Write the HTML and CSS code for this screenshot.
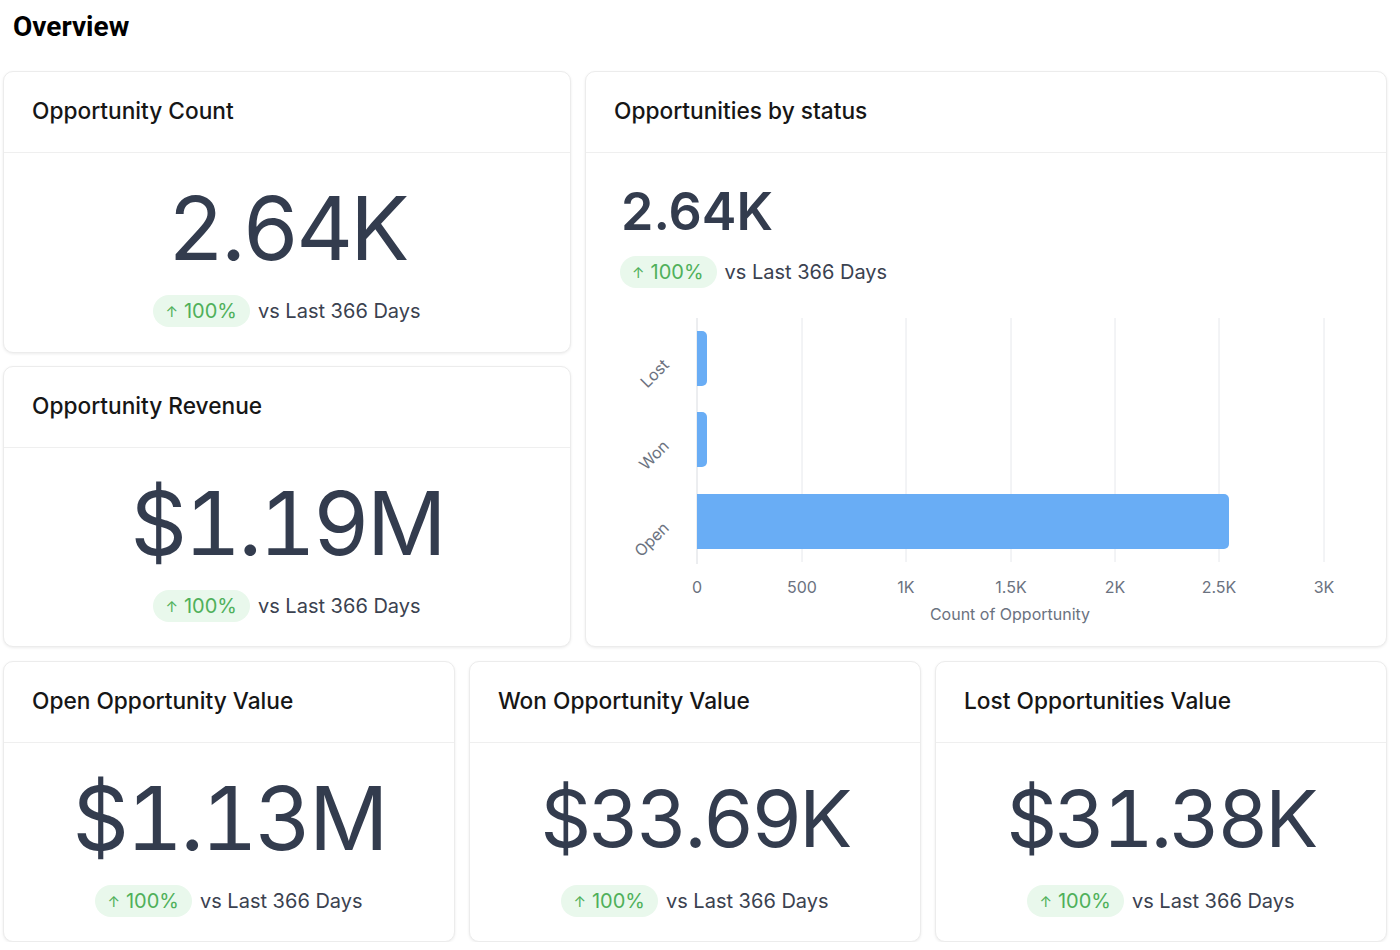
FILE: index.html
```html
<!DOCTYPE html>
<html lang="en">
<head>
    <meta charset="UTF-8">
    <meta name="viewport" content="width=device-width, initial-scale=1.0">
    <title>Overview</title>
    <link rel="stylesheet" href="styles.css">
</head>
<body>
    <div class="page">
        <h1 class="page-title">Overview</h1>

        <div class="top-grid">
            <div class="card kpi-card">
                <div class="card-header">Opportunity Count</div>
                <div class="kpi-body">
                    <div class="kpi-value">2.64K</div>
                    <div class="delta-row">
                        <span class="delta-badge"><span class="arrow">&#8593;</span> 100%</span>
                        <span class="delta-text">vs Last 366 Days</span>
                    </div>
                </div>
            </div>

            <div class="card chart-card">
                <div class="card-header">Opportunities by status</div>
                <div class="chart-body">
                    <div class="chart-value">2.64K</div>
                    <div class="delta-row">
                        <span class="delta-badge"><span class="arrow">&#8593;</span> 100%</span>
                        <span class="delta-text">vs Last 366 Days</span>
                    </div>
                    <svg class="bar-chart" width="800" height="336" viewBox="0 0 800 336">
                        <!-- grid lines -->
                        <g class="grid">
                            <line x1="111" y1="18" x2="111" y2="264" class="axis-line"/>
                            <line x1="216" y1="18" x2="216" y2="262"/>
                            <line x1="320" y1="18" x2="320" y2="262"/>
                            <line x1="425" y1="18" x2="425" y2="262"/>
                            <line x1="529" y1="18" x2="529" y2="262"/>
                            <line x1="633" y1="18" x2="633" y2="262"/>
                            <line x1="738" y1="18" x2="738" y2="262"/>
                        </g>
                        <!-- bars -->
                        <path class="bar" d="M111 31 H116 a5 5 0 0 1 5 5 V81 a5 5 0 0 1 -5 5 H111 Z"/>
                        <path class="bar" d="M111 112 H116 a5 5 0 0 1 5 5 V162 a5 5 0 0 1 -5 5 H111 Z"/>
                        <path class="bar" d="M111 194 H638 a5 5 0 0 1 5 5 V244 a5 5 0 0 1 -5 5 H111 Z"/>
                        <!-- category labels -->
                        <text class="cat-label" transform="translate(84 66) rotate(-45)">Lost</text>
                        <text class="cat-label" transform="translate(84 147) rotate(-45)">Won</text>
                        <text class="cat-label" transform="translate(84 229) rotate(-45)">Open</text>
                        <!-- value axis -->
                        <g class="tick-label">
                            <text x="111" y="293">0</text>
                            <text x="216" y="293">500</text>
                            <text x="320" y="293">1K</text>
                            <text x="425" y="293">1.5K</text>
                            <text x="529" y="293">2K</text>
                            <text x="633" y="293">2.5K</text>
                            <text x="738" y="293">3K</text>
                        </g>
                        <text class="axis-title" x="424" y="320">Count of Opportunity</text>
                    </svg>
                </div>
            </div>

            <div class="card kpi-card">
                <div class="card-header">Opportunity Revenue</div>
                <div class="kpi-body">
                    <div class="kpi-value">$1.19M</div>
                    <div class="delta-row">
                        <span class="delta-badge"><span class="arrow">&#8593;</span> 100%</span>
                        <span class="delta-text">vs Last 366 Days</span>
                    </div>
                </div>
            </div>
        </div>

        <div class="bottom-grid">
            <div class="card kpi-card">
                <div class="card-header">Open Opportunity Value</div>
                <div class="kpi-body">
                    <div class="kpi-value">$1.13M</div>
                    <div class="delta-row">
                        <span class="delta-badge"><span class="arrow">&#8593;</span> 100%</span>
                        <span class="delta-text">vs Last 366 Days</span>
                    </div>
                </div>
            </div>
            <div class="card kpi-card">
                <div class="card-header">Won Opportunity Value</div>
                <div class="kpi-body">
                    <div class="kpi-value long">$33.69K</div>
                    <div class="delta-row">
                        <span class="delta-badge"><span class="arrow">&#8593;</span> 100%</span>
                        <span class="delta-text">vs Last 366 Days</span>
                    </div>
                </div>
            </div>
            <div class="card kpi-card">
                <div class="card-header">Lost Opportunities Value</div>
                <div class="kpi-body">
                    <div class="kpi-value long">$31.38K</div>
                    <div class="delta-row">
                        <span class="delta-badge"><span class="arrow">&#8593;</span> 100%</span>
                        <span class="delta-text">vs Last 366 Days</span>
                    </div>
                </div>
            </div>
        </div>
    </div>
</body>
</html>
```

FILE: styles.css
```css
body {
    margin: 0;
    padding: 0;
    font-family: Inter, "Noto Sans", sans-serif;
    background-color: #ffffff;
    color: #111827;
}
.page {
    padding: 0 13px 0 3px;
}
/* Page title */
.page-title {
    margin: 0 0 24px 10px;
    padding-top: 7px;
    height: 40px;
    line-height: 40px;
    font-family: Roboto, "Liberation Sans", sans-serif;
    font-size: 28px;
    font-weight: 700;
    color: #000;
}
/* Grids */
.top-grid {
    display: grid;
    grid-template-columns: 568px 802px;
    grid-template-rows: 282px 281px;
    column-gap: 14px;
    row-gap: 13px;
}
.chart-card {
    grid-column: 2;
    grid-row: 1 / 3;
}
.bottom-grid {
    display: grid;
    grid-template-columns: repeat(3, 1fr);
    column-gap: 14px;
    margin-top: 14px;
    height: 281px;
}
/* Cards */
.card {
    box-sizing: border-box;
    background: #fff;
    border: 1px solid #ececec;
    border-radius: 10px;
    box-shadow: 0 1px 3px rgba(0, 0, 0, 0.08);
    display: flex;
    flex-direction: column;
    overflow: hidden;
}
.card-header {
    box-sizing: border-box;
    height: 81px;
    flex-shrink: 0;
    display: flex;
    align-items: center;
    padding: 0 0 3px 28px;
    border-bottom: 1px solid #efefef;
    font-size: 22.7px;
    font-weight: 500;
    color: #161616;
}
/* KPI cards */
.kpi-body {
    display: flex;
    flex-direction: column;
    align-items: center;
    padding-top: 31px;
}
.kpi-value {
    height: 88px;
    font-size: 88px;
    line-height: 88px;
    font-weight: 400;
    letter-spacing: -3px;
    font-variant-numeric: tabular-nums;
    color: #333c4e;
}
/* longer values are shrunk to fit, as the widget does */
.kpi-value.long {
    font-size: 79px;
}
.delta-row {
    display: flex;
    align-items: center;
    margin-top: 23px;
    gap: 8px;
}
.delta-badge {
    display: inline-flex;
    align-items: center;
    height: 32px;
    padding: 0 13px 0 12px;
    border-radius: 16px;
    background-color: #e9f8ec;
    color: #4fb05a;
    font-size: 20px;
}
.delta-badge .arrow {
    font-size: 15px;
    margin-right: 6px;
}
.delta-text {
    font-size: 20px;
    color: #3b4250;
}
/* Chart card */
.chart-body {
    display: flex;
    flex-direction: column;
    padding-top: 33px;
}
.chart-value {
    margin-left: 35px;
    font-size: 52px;
    font-weight: 600;
    line-height: 1;
    color: #333c4e;
}
.chart-body .delta-row {
    margin-top: 18px;
    margin-left: 34px;
}
.bar-chart {
    display: block;
    margin-top: 12px;
}
.grid line {
    stroke: #e6e8ec;
    stroke-width: 1;
}
.grid .axis-line {
    stroke: #d9dce1;
}
.bar {
    fill: #69adf5;
}
.cat-label {
    font-size: 16px;
    fill: #6b7280;
    text-anchor: end;
}
.tick-label text {
    font-size: 16px;
    fill: #6b7280;
    text-anchor: middle;
}
.axis-title {
    font-size: 16px;
    fill: #6b7280;
    text-anchor: middle;
}
```
